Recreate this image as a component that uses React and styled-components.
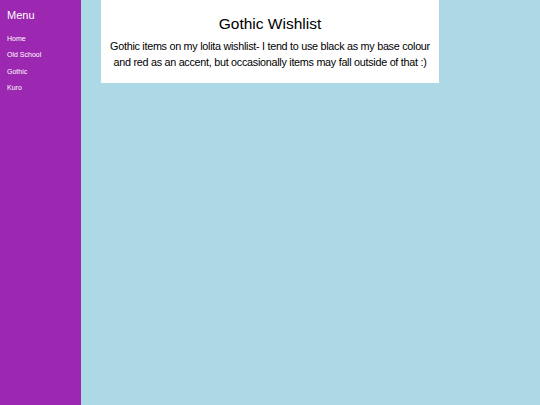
import styled, { createGlobalStyle } from 'styled-components'

const GlobalStyle = createGlobalStyle`
  html, body {
    margin: 0;
    padding: 0;
    height: 100%;
    background-color: #add8e6;
  }
  #root {
    height: 100%;
  }
`

const Page = styled.div`
  display: flex;
  min-height: 405px;
  height: 100%;
  background-color: #add8e6;
`

const Sidebar = styled.nav`
  width: 81px;
  flex-shrink: 0;
  background-color: #9c27b0;
  color: #ffffff;
  padding: 8px 7px;
  box-sizing: border-box;
  font-family: 'Liberation Sans', Arial, sans-serif;
`

const MenuTitle = styled.div`
  font-size: 11px;
  line-height: 14px;
  margin-bottom: 12px;
`

const MenuLink = styled.a`
  display: block;
  color: #ffffff;
  text-decoration: none;
  font-size: 7px;
  line-height: 9px;
  margin-bottom: 7.3px;
`

const Main = styled.main`
  flex: 1;
  padding: 0 20px;
`

const Card = styled.section`
  width: 338px;
  background-color: #ffffff;
  text-align: center;
  padding: 14px 0 13px;
  box-sizing: border-box;
  font-family: 'Liberation Sans', Arial, sans-serif;
  color: #000000;
`

const Title = styled.h1`
  margin: 0 0 4px;
  font-size: 15.5px;
  font-weight: normal;
  line-height: 20px;
`

const Text = styled.p`
  margin: 0;
  font-size: 10.8px;
  letter-spacing: -0.28px;
  line-height: 16px;
`

const links = ['Home', 'Old School', 'Gothic', 'Kuro']

function App() {
  return (
    <>
      <GlobalStyle />
      <Page>
        <Sidebar>
          <MenuTitle>Menu</MenuTitle>
          {links.map((l) => (
            <MenuLink key={l} href="#">{l}</MenuLink>
          ))}
        </Sidebar>
        <Main>
          <Card>
            <Title>Gothic Wishlist</Title>
            <Text>
              Gothic items on my lolita wishlist- I tend to use black as my base colour
              and red as an accent, but occasionally items may fall outside of that :)
            </Text>
          </Card>
        </Main>
      </Page>
    </>
  )
}

export default App
